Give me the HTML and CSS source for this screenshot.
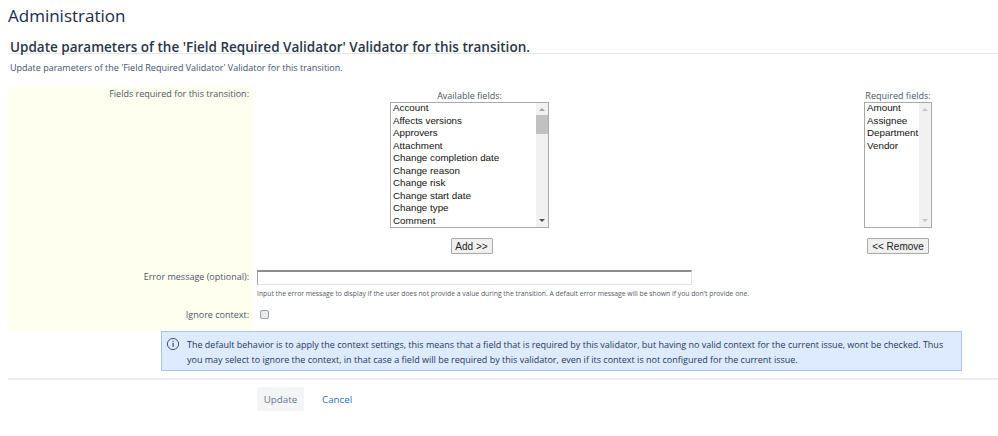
FILE: index.html
```html
<!DOCTYPE html>
<html lang="en">
<head>
    <meta charset="UTF-8">
    <title>Administration</title>
    <link rel="stylesheet" href="styles.css">
</head>
<body>
    <h1 class="page-title">Administration</h1>
    <h2 class="form-title">Update parameters of the 'Field Required Validator' Validator for this transition.</h2>
    <p class="form-desc">Update parameters of the 'Field Required Validator' Validator for this transition.</p>

    <form class="form-grid">
        <div class="label-cell fields-label">Fields required for this transition:</div>
        <div class="fields-cell">
            <div class="picker picker-available">
                <div class="picker-title">Available fields:</div>
                <div class="listbox listbox-available">
                    <ul class="list-items">
                        <li>Account</li>
                        <li>Affects versions</li>
                        <li>Approvers</li>
                        <li>Attachment</li>
                        <li>Change completion date</li>
                        <li>Change reason</li>
                        <li>Change risk</li>
                        <li>Change start date</li>
                        <li>Change type</li>
                        <li>Comment</li>
                    </ul>
                    <div class="scrollbar">
                        <span class="arrow arrow-up"></span>
                        <span class="thumb"></span>
                        <span class="arrow arrow-down"></span>
                    </div>
                </div>
                <button type="button" class="small-btn">Add &gt;&gt;</button>
            </div>
            <div class="picker picker-required">
                <div class="picker-title">Required fields:</div>
                <div class="listbox listbox-required">
                    <ul class="list-items">
                        <li>Amount</li>
                        <li>Assignee</li>
                        <li>Department</li>
                        <li>Vendor</li>
                    </ul>
                    <div class="scrollbar scrollbar-off">
                        <span class="arrow arrow-up"></span>
                        <span class="arrow arrow-down"></span>
                    </div>
                </div>
                <button type="button" class="small-btn">&lt;&lt; Remove</button>
            </div>
        </div>

        <div class="label-cell">Error message (optional):</div>
        <div class="error-cell">
            <input type="text" class="text-input">
            <div class="hint">Input the error message to display if the user does not provide a value during the transition. A default error message will be shown if you don't provide one.</div>
        </div>

        <div class="label-cell">Ignore context:</div>
        <div class="context-cell">
            <span class="checkbox"></span>
        </div>
    </form>

    <div class="info-box">
        <svg class="info-icon" width="14" height="14" viewBox="0 0 14 14">
            <circle cx="7" cy="7" r="5.6" fill="none" stroke="#42526e" stroke-width="1"/>
            <rect x="6.5" y="6" width="1.2" height="4" fill="#42526e"/>
            <rect x="6.5" y="3.8" width="1.2" height="1.3" fill="#42526e"/>
        </svg>
        <p>The default behavior is to apply the context settings, this means that a field that is required by this validator, but having no valid context for the current issue, wont be checked. Thus you may select to ignore the context, in that case a field will be required by this validator, even if its context is not configured for the current issue.</p>
    </div>

    <div class="form-actions">
        <button type="button" class="update-btn">Update</button>
        <a href="#" class="cancel-link">Cancel</a>
    </div>
</body>
</html>
```

FILE: styles.css
```css
* {
    margin: 0;
    padding: 0;
    box-sizing: border-box;
}

body {
    font-family: 'Open Sans', 'Noto Sans', sans-serif;
    font-size: 9px;
    color: #333333;
    background-color: #ffffff;
    height: 436px;
    overflow: hidden;
}

.page-title {
    font-size: 17px;
    font-weight: 400;
    line-height: 22px;
    color: #172b4d;
    padding: 5px 0 0 8px;
}

.form-title {
    font-size: 13.5px;
    font-weight: 600;
    line-height: 16px;
    color: #2a3547;
    margin: 12px 0 0 10px;
    border-bottom: 1px solid #e4e6ea;
    height: 15px;
}

.form-desc {
    font-size: 9px;
    line-height: 12px;
    color: #42526e;
    margin: 8px 0 0 10px;
}

.form-grid {
    display: grid;
    grid-template-columns: 245px 1fr;
    grid-template-rows: 184px 38px 23px;
    margin: 12px 0 0 8px;
}

.label-cell {
    background-color: #fffff0;
    text-align: right;
    padding-right: 4px;
    color: #4a5568;
    font-size: 9px;
    line-height: 13px;
}

.fields-label {
    padding-top: 1px;
}

.fields-cell {
    display: flex;
    position: relative;
    padding-left: 137px;
}

.picker {
    display: flex;
    flex-direction: column;
    align-items: center;
}

.picker-available {
    width: 159px;
}

.picker-required {
    width: 68px;
    margin-left: 315px;
}

.picker-title {
    font-size: 9px;
    line-height: 13px;
    height: 16px;
    padding-top: 3px;
    color: #4a5568;
    white-space: nowrap;
}

.listbox {
    display: flex;
    width: 100%;
    height: 126px;
    border: 1px solid #a9a9a9;
    background-color: #ffffff;
    font-family: 'Liberation Sans', sans-serif;
    font-size: 9.8px;
    color: #111111;
    overflow: hidden;
}

.list-items {
    flex: 1;
    list-style: none;
    margin-top: -1px;
}

.list-items li {
    height: 12.5px;
    line-height: 12.5px;
    padding-left: 2px;
    white-space: nowrap;
}

.scrollbar {
    display: flex;
    flex-direction: column;
    align-items: center;
    width: 12px;
    background-color: #f1f1f1;
    position: relative;
}

.arrow {
    width: 0;
    height: 0;
    border-left: 3px solid transparent;
    border-right: 3px solid transparent;
    position: absolute;
}

.arrow-up {
    top: 5px;
    border-bottom: 3px solid #a3a3a3;
}

.arrow-down {
    bottom: 5px;
    border-top: 3px solid #505050;
}

.scrollbar-off .arrow-up {
    border-bottom-color: #c4c4c4;
}

.scrollbar-off .arrow-down {
    border-top-color: #c4c4c4;
}

.thumb {
    position: absolute;
    top: 12px;
    left: 0;
    width: 100%;
    height: 19px;
    background-color: #c1c1c1;
}

.small-btn {
    font-family: 'Liberation Sans', sans-serif;
    font-size: 10px;
    height: 16px;
    margin-top: 10px;
    color: #222222;
    background-color: #f0f0f0;
    border: 1px solid #a9a9a9;
    border-radius: 1px;
    white-space: nowrap;
}

.picker-available .small-btn {
    width: 42px;
    margin-left: 4px;
}

.picker-required .small-btn {
    width: 62px;
}

.error-cell {
    padding-left: 4px;
}

.text-input {
    display: block;
    width: 435px;
    height: 15px;
    border: 1px solid #e2e2e2;
    border-top: 2px solid #8c8c8c;
    border-left: 1px solid #a0a0a0;
}

.hint {
    font-size: 6.8px;
    line-height: 10px;
    color: #555b66;
    margin-top: 4px;
    white-space: nowrap;
}

.context-cell {
    padding: 2px 0 0 7px;
}

.checkbox {
    display: block;
    width: 9px;
    height: 9px;
    background-color: #e9eaec;
    border: 1px solid #9aa0ab;
    border-radius: 2px;
}

.info-box {
    display: flex;
    gap: 7px;
    width: 801px;
    height: 40px;
    margin-left: 161px;
    padding: 5px 5px 0 4px;
    background-color: #deebff;
    border: 1px solid #a8c7e8;
    font-size: 9px;
    line-height: 15px;
    color: #253858;
}

.info-icon {
    flex: none;
}

.form-actions {
    display: flex;
    align-items: center;
    gap: 18px;
    margin: 7px 0 0 8px;
    padding: 7px 0 0 249px;
    border-top: 2px solid #ebecf0;
}

.update-btn {
    font-family: inherit;
    font-size: 9.8px;
    width: 47px;
    height: 24px;
    color: #6b778c;
    background-color: #f4f5f7;
    border: none;
    border-radius: 2px;
}

.cancel-link {
    font-size: 9.8px;
    color: #2b6fc9;
    text-decoration: none;
}
```
